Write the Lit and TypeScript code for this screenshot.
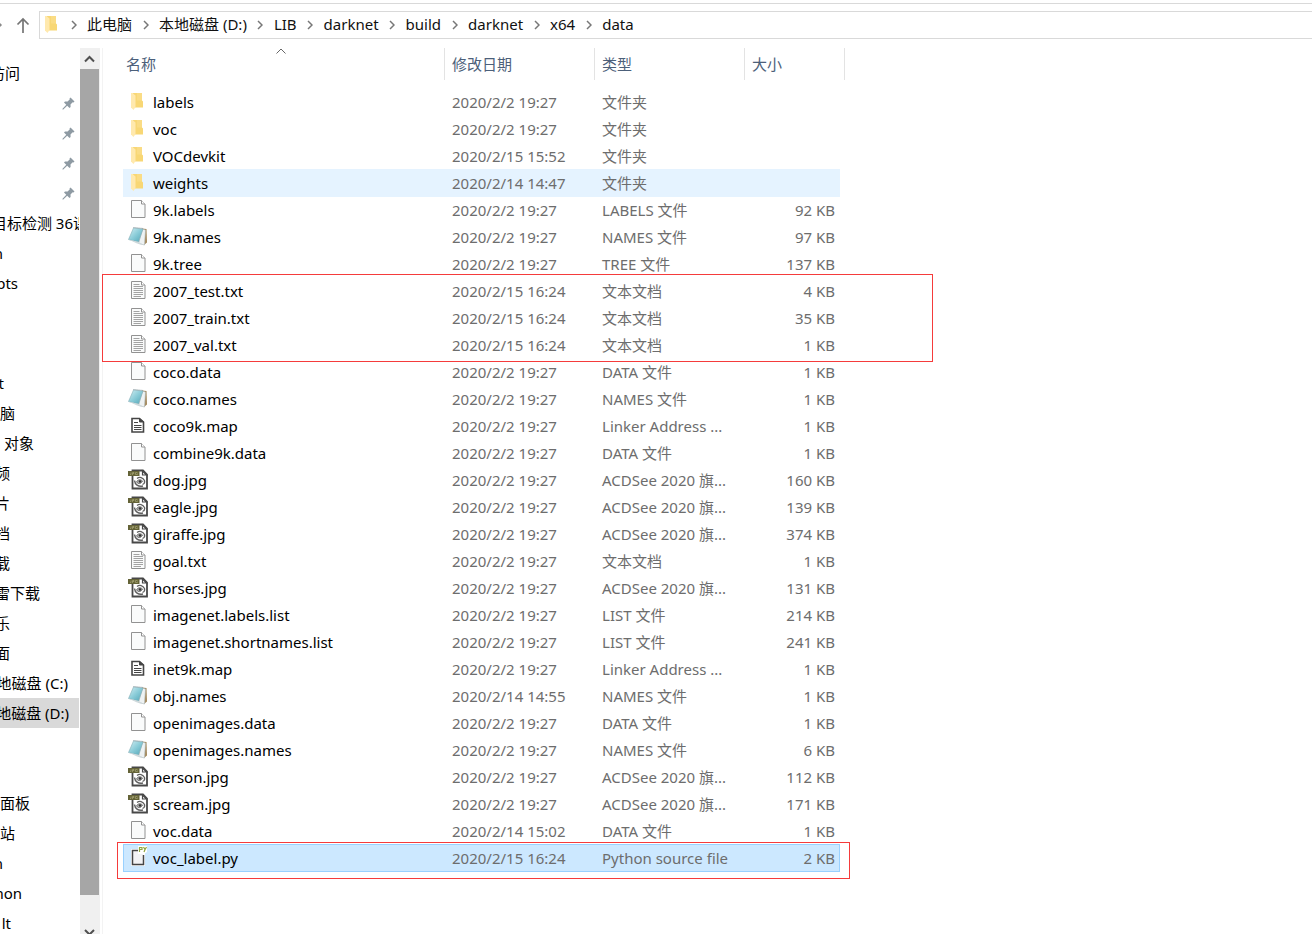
import { LitElement, html, css, svg, nothing } from "lit";
import { customElement, property } from "lit/decorators.js";
import { classMap } from "lit/directives/class-map.js";
import { styleMap } from "lit/directives/style-map.js";

type Kind = "folder" | "blank" | "notes" | "text" | "map" | "jpg" | "py";
interface Entry {
  name: string;
  date: string;
  type: string;
  size: string;
  kind: Kind;
  state?: "hover" | "selected";
}
interface NavItem {
  text: string;
  end: number;
  pinned?: boolean;
  current?: boolean;
  group?: boolean;
}

const D = "2020/2/2 19:27";
const ACD = "ACDSee 2020 旗...";
const file = (name: string, date: string, type: string, size: string, kind: Kind, state?: Entry["state"]): Entry => ({
  name, date, type, size, kind, state,
});

const ENTRIES: Entry[] = [
  file("labels", D, "文件夹", "", "folder"),
  file("voc", D, "文件夹", "", "folder"),
  file("VOCdevkit", "2020/2/15 15:52", "文件夹", "", "folder"),
  file("weights", "2020/2/14 14:47", "文件夹", "", "folder", "hover"),
  file("9k.labels", D, "LABELS 文件", "92 KB", "blank"),
  file("9k.names", D, "NAMES 文件", "97 KB", "notes"),
  file("9k.tree", D, "TREE 文件", "137 KB", "blank"),
  file("2007_test.txt", "2020/2/15 16:24", "文本文档", "4 KB", "text"),
  file("2007_train.txt", "2020/2/15 16:24", "文本文档", "35 KB", "text"),
  file("2007_val.txt", "2020/2/15 16:24", "文本文档", "1 KB", "text"),
  file("coco.data", D, "DATA 文件", "1 KB", "blank"),
  file("coco.names", D, "NAMES 文件", "1 KB", "notes"),
  file("coco9k.map", D, "Linker Address ...", "1 KB", "map"),
  file("combine9k.data", D, "DATA 文件", "1 KB", "blank"),
  file("dog.jpg", D, ACD, "160 KB", "jpg"),
  file("eagle.jpg", D, ACD, "139 KB", "jpg"),
  file("giraffe.jpg", D, ACD, "374 KB", "jpg"),
  file("goal.txt", D, "文本文档", "1 KB", "text"),
  file("horses.jpg", D, ACD, "131 KB", "jpg"),
  file("imagenet.labels.list", D, "LIST 文件", "214 KB", "blank"),
  file("imagenet.shortnames.list", D, "LIST 文件", "241 KB", "blank"),
  file("inet9k.map", D, "Linker Address ...", "1 KB", "map"),
  file("obj.names", "2020/2/14 14:55", "NAMES 文件", "1 KB", "notes"),
  file("openimages.data", D, "DATA 文件", "1 KB", "blank"),
  file("openimages.names", D, "NAMES 文件", "6 KB", "notes"),
  file("person.jpg", D, ACD, "112 KB", "jpg"),
  file("scream.jpg", D, ACD, "171 KB", "jpg"),
  file("voc.data", "2020/2/14 15:02", "DATA 文件", "1 KB", "blank"),
  file("voc_label.py", "2020/2/15 16:24", "Python source file", "2 KB", "py", "selected"),
];

const NAV: NavItem[] = [
  { text: "访问", end: 20 },
  { text: "", end: 0, pinned: true },
  { text: "", end: 0, pinned: true },
  { text: "", end: 0, pinned: true },
  { text: "", end: 0, pinned: true },
  { text: "目标检测 36课", end: 88 },
  { text: "n", end: 3 },
  { text: "pts", end: 18 },
  { text: "", end: 0, group: true },
  { text: "", end: 0 },
  { text: "t", end: 4 },
  { text: "脑", end: 15 },
  { text: "对象", end: 34 },
  { text: "频", end: 10 },
  { text: "片", end: 10 },
  { text: "档", end: 10 },
  { text: "载", end: 10 },
  { text: "雷下载", end: 40 },
  { text: "乐", end: 10 },
  { text: "面", end: 10 },
  { text: "地磁盘 (C:)", end: 68 },
  { text: "地磁盘 (D:)", end: 69, current: true },
  { text: "", end: 0 },
  { text: "", end: 0 },
  { text: "面板", end: 30 },
  { text: "站", end: 15 },
  { text: "n", end: 3 },
  { text: "hon", end: 22 },
  { text: "lt", end: 11 },
];

const PATH = ["此电脑", "本地磁盘 (D:)", "LIB", "darknet", "build", "darknet", "x64", "data"];

const sheet = svg`
  <path d="M3.5 2.5H13.5L17 6V19.5H3.5Z" fill="#fafbfb" stroke="#929292"/>
  <path d="M13.5 2.5V6H17" fill="#fff" stroke="#929292"/>`;

const GLYPHS = {
  folder: svg`
    <path d="M4.500 3H14V10.500L15 11.500V17.500H5Z" fill="#f8d775"/>
    <path d="M9 3H14V10.500H9Z" fill="#fadc85"/>
    <path d="M3 3H4.500L7.500 5.500V17L5.500 20L3 17.500Z" fill="#ffe9ae"/>`,
  blank: sheet,
  text: svg`${sheet}
    <path d="M5.500 5.500H11.500M5.500 7.500H15M5.500 9.500H15M5.500 11.500H15M5.500 13.500H15M5.500 15.500H15M5.500 17.500H13" stroke="#a3a3a3"/>`,
  notes: svg`
    <path d="M14 3.500L18.500 4L19 17.500L16 20Z" fill="#a5895c"/>
    <path d="M14.500 4L17.500 5L16.500 20L10.500 18.500Z" fill="#eef2f3" stroke="#a9b3b6" stroke-width=".6"/>
    <path d="M5.500 3L15 4L10.500 17L.5 14.500Z" fill="url(#teal)" stroke="#83adb6" stroke-width=".6"/>
    <path d="M.5 14.500L10.500 17L16 20L9 18.500Z" fill="#cfd9db"/>
    <path d="M5.500 2.500L15.500 3.500" stroke="#87949a" stroke-dasharray="1 1"/>`,
  map: svg`
    <path d="M4 4.500H11.500L15.500 8V18H4Z" fill="#fff" stroke="#454545" stroke-width="1.600"/>
    <path d="M11.500 4.500V8H15.500Z" fill="#454545" stroke="#454545"/>
    <path d="M6 8.500H10M6 11.500H13.500M6 13.500H13.500M6 15.500H13.500" stroke="#454545"/>`,
  jpg: svg`
    <path d="M4.500 2.500H15L19 6.500V20.500H4.500Z" fill="#fff" stroke="#484848" stroke-width="1.800"/>
    <path d="M14.500 3V7H18.500Z" fill="#fff" stroke="#484848" stroke-width="1.200"/>
    <path d="M9 10.500C11.500 8.500 15 9.500 16.500 12.500C17 14.500 16 16 14.500 16.500" fill="none" stroke="#606060" stroke-width="1.300"/>
    <path d="M6.500 12.500C7 16.500 10 19 15 18" fill="none" stroke="#606060" stroke-width="1.500"/>
    <path d="M8.500 14C9.500 11.500 12.500 11 14.500 13C13 16 10.500 16.500 8.500 14Z" fill="#b5b5b5" stroke="#555" stroke-width=".8"/>
    <circle cx="12" cy="13.500" r="1.300" fill="#333"/>
    <path d="M0 3H11.500V8H0Z" fill="#646337"/>
    <path d="M2 6.500H3V4.500M4.500 7V4.500H6V5.500H4.500M9.500 4.500H7.500V6.500H9.500V5.500" fill="none" stroke="#a6a577" stroke-width=".7"/>`,
  py: svg`
    <path d="M3 3H17V20H3Z" fill="#fff"/>
    <path d="M11 4.500H4.500V18.500H15.500V9" fill="#f3f3f5" stroke="#454545" stroke-width="1.500"/>
    <path d="M10 0H19V6L16 8H10Z" fill="#fff"/>
    <path d="M11.500 6V1.500H14V3.500H11.500M15.500 1L17 3.500L18.500 1M17 3.500L16 6" fill="none" stroke="#8fa63f" stroke-width="1.200"/>`,
};

@customElement("file-icon")
export class FileIcon extends LitElement {
  @property() kind: Kind = "blank";

  static styles = css`
    :host { display: block; flex: none; width: 20px; height: 22px; margin-bottom: 1px; }
    .glyph { display: block; }
  `;

  render() {
    return html`<svg class="glyph" width="20" height="22" viewBox="0 0 20 22" fill="none" aria-hidden="true">
      <defs>
        <linearGradient id="teal" x1="0" y1="0" x2="1" y2="1">
          <stop offset="0" stop-color="#d3eef3" />
          <stop offset=".5" stop-color="#8accd8" />
          <stop offset="1" stop-color="#4fa3b5" />
        </linearGradient>
      </defs>
      ${GLYPHS[this.kind]}
    </svg>`;
  }
}

@customElement("address-bar")
export class AddressBar extends LitElement {
  static styles = css`
    :host { display: block; flex: none; padding-top: 3px; }
    .bar { display: flex; align-items: center; border-top: 1px solid #d9d9d9; padding-top: 7px; }
    .tools { display: flex; align-items: center; justify-content: space-between; width: 39px; height: 28px; box-sizing: border-box; padding-right: 9px; }
    .tool { border: 0; padding: 0; background: none; display: block; }
    .tool svg, .sep svg { display: block; }
    .box { flex: 1; min-width: 0; display: flex; align-items: center; height: 28px; box-sizing: border-box; border: 1px solid #d9d9d9; border-right: 0; padding: 0 0 1px 2px; overflow: hidden; }
    .crumbs { display: flex; align-items: center; margin: 0 0 0 -2px; padding: 0; list-style: none; }
    .crumb { display: flex; align-items: center; white-space: nowrap; }
    .sep { display: flex; justify-content: center; width: 27px; }
    .link { color: #111; text-decoration: none; line-height: 22px; padding-bottom: 1px; }
  `;

  render() {
    return html`<div class="bar">
      <div class="tools">
        <button class="tool" aria-label="最近的位置">
          <svg width="3" height="8" viewBox="0 0 3 8"><path d="M-2 1L1 4L-2 7" fill="none" stroke="#8a8a8a" stroke-width="1.500" /></svg>
        </button>
        <button class="tool" aria-label="上移">
          <svg width="14" height="18" viewBox="0 0 14 18"><path d="M7 17V3M1.500 8.500L7 3L12.500 8.500" fill="none" stroke="#757575" stroke-width="1.700" /></svg>
        </button>
      </div>
      <nav class="box">
        <file-icon kind="folder"></file-icon>
        <ol class="crumbs">
          ${PATH.map(
            (p) => html`<li class="crumb">
              <span class="sep"><svg width="6" height="10" viewBox="0 0 6 10"><path d="M1 1L5 5L1 9" fill="none" stroke="#777" stroke-width="1.500" /></svg></span>
              <a class="link" href="#">${p}</a>
            </li>`
          )}
        </ol>
      </nav>
    </div>`;
  }
}

@customElement("nav-pane")
export class NavPane extends LitElement {
  static styles = css`
    :host { display: flex; flex: none; width: 100px; overflow: hidden; }
    .list { flex: none; width: 79px; margin: 0 1px 0 0; padding: 10px 0 0; list-style: none; overflow: hidden; }
    .item { display: flex; align-items: center; justify-content: space-between; height: 30px; }
    .group { margin-top: 10px; }
    .current { background: #d9d9d9; }
    .label { display: flex; flex: none; justify-content: flex-end; white-space: nowrap; color: #000; text-decoration: none; line-height: 22px; }
    .pin { display: block; margin-right: 4px; }
    .scroll { flex: 1; display: flex; flex-direction: column; background: #f0f0f0; }
    .step { display: flex; justify-content: center; align-items: center; flex: none; height: 21px; border: 0; padding: 0 1px 0 0; background: none; }
    .down { height: 39px; align-items: flex-end; }
    .thumb { flex: 1; margin-right: 1px; background: #a6a6a6; }
  `;

  render() {
    return html`
      <ul class="list">
        ${NAV.map(
          (n) => html`<li class=${classMap({ item: true, current: !!n.current, group: !!n.group })}>
            <a class="label" href="#" style=${styleMap({ width: `${n.end}px` })}>${n.text}</a>
            ${n.pinned
              ? html`<svg class="pin" width="13" height="13" viewBox="0 0 13 13"><path d="M8.500 .5L12.500 4.500L11.500 5.500L10.700 5.200L8.500 7.400L8.600 10L7.500 11L5.200 8.700L1 12.700L.3 12L4.300 7.800L2 5.500L3 4.400L5.600 4.500L7.800 2.300L7.500 1.500Z" fill="#8e9aa3" /></svg>`
              : nothing}
          </li>`
        )}
      </ul>
      <div class="scroll">
        <button class="step" aria-label="向上滚动">
          <svg width="11" height="8" viewBox="0 0 11 8"><path d="M1 6.500L5.500 2L10 6.500" fill="none" stroke="#505050" stroke-width="2" /></svg>
        </button>
        <div class="thumb"></div>
        <button class="step down" aria-label="向下滚动">
          <svg width="11" height="5" viewBox="0 0 11 5"><path d="M1 1L5.500 5.500L10 1" fill="none" stroke="#505050" stroke-width="2" /></svg>
        </button>
      </div>
    `;
  }
}

@customElement("file-list")
export class FileList extends LitElement {
  static styles = css`
    :host { display: block; position: relative; flex: 1; min-width: 0; margin-left: 2px; border-left: 1px solid #f3f3f3; }
    .table { table-layout: fixed; width: 727px; margin-left: 15px; border-collapse: separate; border-spacing: 0; color: #6d6d6d; }
    .edge { width: 5px; }
    .c-name { width: 322px; }
    .c-mid { width: 150px; }
    .c-size { width: 95px; }
    .th { position: relative; height: 32px; padding: 0 0 0 7px; box-sizing: border-box; border-right: 1px solid #e3e3e3; font-weight: 400; text-align: left; color: #4c607a; }
    .first { padding-left: 8px; }
    .caret { position: absolute; top: 0; left: 50%; margin-left: -5px; }
    .gap { height: 8px; padding: 0; }
    .td { height: 27px; padding: 0 0 0 7px; line-height: 22px; white-space: nowrap; }
    .name { padding-left: 5px; color: #000; }
    .size { padding: 0 5px 0 0; text-align: right; }
    .cell { display: flex; align-items: center; gap: 5px; height: 27px; }
    .hover .td { background: #e5f3ff; box-shadow: 0 1px 0 #e5f3ff; }
    .selected .td { background: #cce8ff; box-shadow: inset 0 1px 0 #99d1ff, 0 1px 0 #99d1ff; }
    .selected .name { box-shadow: inset 1px 1px 0 #99d1ff, 0 1px 0 #99d1ff; }
    .selected .size { box-shadow: inset -1px 1px 0 #99d1ff, 0 1px 0 #99d1ff; }
    .mark { position: absolute; box-sizing: border-box; border: 1px solid #f53b3b; pointer-events: none; }
    .mark-txt { left: -1px; top: 226px; width: 831px; height: 88px; }
    .mark-py { left: 14px; top: 794px; width: 733px; height: 37px; }
  `;

  render() {
    return html`
      <table class="table">
        <colgroup>
          <col class="edge" /><col class="c-name" /><col class="c-mid" /><col class="c-mid" /><col class="c-size" /><col class="edge" />
        </colgroup>
        <thead>
          <tr>
            <th class="th first" colspan="2" scope="col">
              <svg class="caret" width="10" height="6" viewBox="0 0 10 6"><path d="M.5 5.500L5 1L9.500 5.500" fill="none" stroke="#666" /></svg>
              <span class="text">名称</span>
            </th>
            <th class="th" scope="col">修改日期</th>
            <th class="th" scope="col">类型</th>
            <th class="th" colspan="2" scope="col">大小</th>
          </tr>
          <tr><td class="gap" colspan="6"></td></tr>
        </thead>
        <tbody>
          ${ENTRIES.map(
            (e) => html`<tr class=${e.state ?? ""}>
              <td></td>
              <td class="td name"><div class="cell"><file-icon kind=${e.kind}></file-icon><span>${e.name}</span></div></td>
              <td class="td">${e.date}</td>
              <td class="td">${e.type}</td>
              <td class="td size">${e.size}</td>
              <td></td>
            </tr>`
          )}
        </tbody>
      </table>
      <div class="mark mark-txt"></div>
      <div class="mark mark-py"></div>
    `;
  }
}

@customElement("app-root")
export class AppRoot extends LitElement {
  static styles = css`
    :host { display: flex; flex-direction: column; height: 100vh; overflow: hidden; background: #fff; font: 15px/22px "Noto Sans", "Noto Sans CJK SC", sans-serif; }
    .body { display: flex; flex: 1; min-height: 0; margin-top: 9px; }
  `;

  render() {
    return html`
      <address-bar></address-bar>
      <div class="body">
        <nav-pane></nav-pane>
        <file-list></file-list>
      </div>
    `;
  }
}
